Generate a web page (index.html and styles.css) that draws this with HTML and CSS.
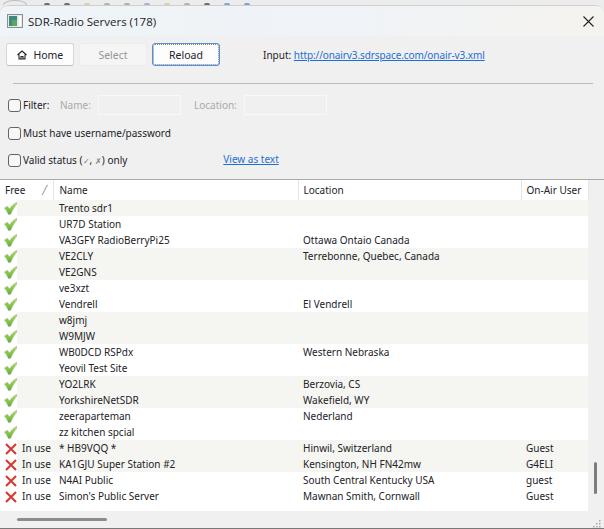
FILE: index.html
```html
<!DOCTYPE html>
<html>
<head>
<meta charset="utf-8">
<title>SDR-Radio Servers (178)</title>
<link rel="stylesheet" href="styles.css">
</head>
<body>

<svg class="defs" width="0" height="0">
  <defs>
    <linearGradient id="tick" x1="0" y1="0" x2="0" y2="1">
      <stop offset="0" stop-color="#bfe264"/>
      <stop offset="1" stop-color="#5cb035"/>
    </linearGradient>
    <symbol id="ok" viewBox="0 0 14 14">
      <path d="M0.4 7 L3.4 5.2 L5.6 8 C7.4 5 10 2.6 13.6 0.8 L13.9 2 C10.8 5 8.4 8.6 6.8 13.2 L4.4 13.6 C3.4 11 2.2 9 0.4 7 Z" fill="url(#tick)" stroke="#8fa884" stroke-width="0.4"/>
    </symbol>
    <symbol id="bad" viewBox="0 0 12 12">
      <path d="M1 1 L11 11 M11 1 L1 11" stroke="#d9352f" stroke-width="2" fill="none"/>
    </symbol>
  </defs>
</svg>

<div class="desk">
  <i class="ring"></i>
  <i class="dot dark"></i><i class="dot dark"></i><i class="dot tan"></i>
  <i class="dot grey"></i><i class="dot grey"></i><i class="dot violet"></i>
  <i class="dot tan"></i><i class="dot grey"></i><i class="dot dark"></i>
  <i class="dot blue"></i><i class="dot blue"></i>
</div>

<div class="window">
  <div class="titlebar">
    <svg class="appicon" width="16" height="14" viewBox="0 0 16 14">
      <rect x="0.5" y="0.5" width="15" height="13" fill="#e8e8e8" stroke="#8a8f94"/>
      <rect x="2" y="2" width="8" height="10" fill="#3d8a7c"/>
      <rect x="5" y="6" width="5" height="6" fill="#5aa860"/>
      <rect x="12" y="2" width="2" height="10" fill="#fff"/>
    </svg>
    <span class="title">SDR-Radio Servers (178)</span>
    <svg class="close" width="11" height="11" viewBox="0 0 11 11">
      <path d="M0.5 0.5 L10.5 10.5 M10.5 0.5 L0.5 10.5" stroke="#222" stroke-width="1.1" fill="none"/>
    </svg>
  </div>

  <div class="toolbar">
    <button class="btn">
      <svg width="10" height="10" viewBox="0 0 10 10">
        <path d="M0.5 5 L5 1 L9.5 5 M2 4.5 V9 H8 V4.5 M4 9 V6.5 H6 V9" stroke="#222" stroke-width="1.1" fill="none"/>
      </svg>
      Home
    </button>
    <button class="btn off">Select</button>
    <button class="btn focus">Reload</button>
    <span class="input">Input: <a href="#">http://onairv3.sdrspace.com/onair-v3.xml</a></span>
  </div>

  <div class="rule"></div>

  <div class="filters">
    <div class="line">
      <span class="box"></span><span class="lbl filter">Filter:</span>
      <span class="lbl dim name">Name:</span><span class="field"></span>
      <span class="lbl dim loc">Location:</span><span class="field"></span>
    </div>
    <div class="line">
      <span class="box"></span><span class="lbl">Must have username/password</span>
    </div>
    <div class="line">
      <span class="box"></span><span class="lbl valid">Valid status (<em>✓</em>, <em>✗</em>) only</span>
      <a class="astext" href="#">View as text</a>
    </div>
  </div>

  <div class="listarea">
    <div class="listwrap">
      <table class="servers">
        <colgroup>
          <col class="c-icon"><col class="c-free"><col class="c-name"><col class="c-loc"><col class="c-user">
        </colgroup>
        <thead>
          <tr>
            <th colspan="2"><div class="freehead"><span>Free</span><span class="sort">╱</span></div></th>
            <th>Name</th><th>Location</th><th>On-Air User</th>
          </tr>
        </thead>
        <tbody>
          <tr class="alt"><td class="ic"><svg><use href="#ok"/></svg></td><td></td><td>Trento sdr1</td><td></td><td></td></tr>
          <tr><td class="ic"><svg><use href="#ok"/></svg></td><td></td><td>UR7D Station</td><td></td><td></td></tr>
          <tr><td class="ic"><svg><use href="#ok"/></svg></td><td></td><td>VA3GFY RadioBerryPi25</td><td>Ottawa Ontaio Canada</td><td></td></tr>
          <tr class="alt"><td class="ic"><svg><use href="#ok"/></svg></td><td></td><td>VE2CLY</td><td>Terrebonne, Quebec, Canada</td><td></td></tr>
          <tr class="alt"><td class="ic"><svg><use href="#ok"/></svg></td><td></td><td>VE2GNS</td><td></td><td></td></tr>
          <tr><td class="ic"><svg><use href="#ok"/></svg></td><td></td><td>ve3xzt</td><td></td><td></td></tr>
          <tr><td class="ic"><svg><use href="#ok"/></svg></td><td></td><td>Vendrell</td><td>El Vendrell</td><td></td></tr>
          <tr class="alt"><td class="ic"><svg><use href="#ok"/></svg></td><td></td><td>w8jmj</td><td></td><td></td></tr>
          <tr class="alt"><td class="ic"><svg><use href="#ok"/></svg></td><td></td><td>W9MJW</td><td></td><td></td></tr>
          <tr><td class="ic"><svg><use href="#ok"/></svg></td><td></td><td>WB0DCD RSPdx</td><td>Western Nebraska</td><td></td></tr>
          <tr><td class="ic"><svg><use href="#ok"/></svg></td><td></td><td>Yeovil Test Site</td><td></td><td></td></tr>
          <tr class="alt"><td class="ic"><svg><use href="#ok"/></svg></td><td></td><td>YO2LRK</td><td>Berzovia, CS</td><td></td></tr>
          <tr class="alt"><td class="ic"><svg><use href="#ok"/></svg></td><td></td><td>YorkshireNetSDR</td><td>Wakefield, WY</td><td></td></tr>
          <tr><td class="ic"><svg><use href="#ok"/></svg></td><td></td><td>zeeraparteman</td><td>Nederland</td><td></td></tr>
          <tr><td class="ic"><svg><use href="#ok"/></svg></td><td></td><td>zz kitchen spcial</td><td></td><td></td></tr>
          <tr class="alt"><td class="ic"><svg class="x"><use href="#bad"/></svg></td><td>In use</td><td>* HB9VQQ *</td><td>Hinwil, Switzerland</td><td>Guest</td></tr>
          <tr class="alt"><td class="ic"><svg class="x"><use href="#bad"/></svg></td><td>In use</td><td>KA1GJU Super Station #2</td><td>Kensington, NH FN42mw</td><td>G4ELI</td></tr>
          <tr><td class="ic"><svg class="x"><use href="#bad"/></svg></td><td>In use</td><td>N4AI Public</td><td>South Central Kentucky USA</td><td>guest</td></tr>
          <tr><td class="ic"><svg class="x"><use href="#bad"/></svg></td><td>In use</td><td>Simon's Public Server</td><td>Mawnan Smith, Cornwall</td><td>Guest</td></tr>
        </tbody>
      </table>
    </div>
    <div class="vscroll"><div class="vthumb"></div></div>
  </div>

  <div class="statusbar">
    <div class="hthumb"></div>
    <svg class="grip" width="9" height="9" viewBox="0 0 9 9">
      <path d="M7 1h1.5v1.5H7z M4 4h1.5v1.5H4z M7 4h1.5v1.5H7z M1 7h1.5v1.5H1z M4 7h1.5v1.5H4z M7 7h1.5v1.5H7z" fill="#a8a8a8"/>
    </svg>
  </div>
</div>

</body>
</html>
```

FILE: styles.css
```css
html, body{
  margin:0px;
  padding:0px;
  height:529px;
  overflow:hidden;
  background:rgb(236,236,236);
}
body{
  font-family:"Noto Sans", sans-serif;
  font-size:10px;
  color:rgb(34,34,40);
}
.defs{
  display:block;
  height:0px;
}

.desk{
  height:5px;
  display:flex;
  gap:14px;
  align-items:flex-end;
  padding-left:3px;
  overflow:hidden;
}
.desk .ring{
  width:22px;
  height:8px;
  margin-right:3px;
  margin-bottom:-5px;
  border:1px solid rgb(190,190,190);
  border-radius:50%;
  flex:none;
}
.desk .dot{
  width:6px;
  height:2px;
  flex:none;
  border-radius:3px 3px 0px 0px;
}
.dot.dark{ background:rgb(110,110,110); }
.dot.tan{ background:rgb(220,205,170); }
.dot.grey{ background:rgb(175,175,175); }
.dot.violet{ background:rgb(175,170,215); }
.dot.blue{ background:rgb(130,160,215); }

.window{
  height:522px;
  display:flex;
  flex-direction:column;
  background:rgb(240,240,240);
  border-top:1px solid rgb(208,208,208);
  border-bottom:1px solid rgb(120,120,120);
  border-radius:9px 9px 0px 0px;
  overflow:hidden;
}

.titlebar{
  height:30px;
  flex:none;
  display:flex;
  align-items:center;
  padding:0px 10px 0px 7px;
  background:linear-gradient(to right, rgb(238,244,247), rgb(240,243,247) 60%, rgb(245,243,239));
}
.appicon{
  margin-right:5px;
}
.title{
  font-family:"Open Sans", sans-serif;
  font-size:11.5px;
  flex:1;
}

.toolbar{
  height:23px;
  flex:none;
  display:flex;
  align-items:center;
  margin-top:7px;
  padding-left:6px;
}
.btn{
  width:68px;
  height:23px;
  margin-right:5px;
  padding:0px;
  font-family:"Noto Sans", sans-serif;
  font-size:10.5px;
  color:rgb(34,34,40);
  background:rgb(253,253,253);
  border:1px solid rgb(214,214,214);
  border-bottom-color:rgb(190,190,190);
  border-radius:3px;
}
.btn svg{
  margin-right:4px;
  vertical-align:-1px;
}
.btn.off{
  color:rgb(150,150,150);
  background:rgb(245,245,245);
  border-color:rgb(236,236,236);
}
.btn.focus{
  background:rgb(253,253,253);
  border:1px solid rgb(80,145,215);
  outline:1px dotted rgb(130,130,130);
  outline-offset:-2px;
}
.input{
  margin-left:38px;
}
.input a{
  letter-spacing:-0.1px;
}
a{
  color:rgb(30,110,215);
}

.rule{
  height:1px;
  flex:none;
  margin:17px 11px 0px 13px;
  background:rgb(185,185,185);
}

.filters{
  height:95px;
  flex:none;
  border-bottom:1px solid rgb(170,170,170);
}
.line{
  height:20px;
  display:flex;
  align-items:center;
  padding-left:8px;
  margin-top:7px;
}
.line:first-child{
  margin-top:11px;
}
.line:nth-child(2){
  margin-top:8px;
}
.box{
  width:11px;
  height:11px;
  flex:none;
  margin-right:2px;
  background:rgb(247,247,247);
  border:1px solid rgb(100,100,100);
  border-radius:3px;
}
.lbl.filter{
  width:27px;
}
.lbl.dim{
  color:rgb(170,170,170);
}
.lbl.name{
  margin-left:10px;
  width:38px;
}
.lbl.loc{
  margin-left:13px;
  width:50px;
}
.field{
  width:81px;
  height:18px;
  background:rgb(240,240,240);
  border:1px solid rgb(248,248,248);
}
.valid em{
  font-style:normal;
  font-size:8px;
  color:rgb(120,120,120);
}
.astext{
  margin-left:96px;
  margin-top:-2px;
}

.listarea{
  height:331px;
  flex:none;
  display:flex;
}
.listwrap{
  width:588px;
  flex:none;
  background:white;
}
.servers{
  width:588px;
  table-layout:fixed;
  border-collapse:collapse;
}
.c-icon{ width:17px; }
.c-free{ width:36px; }
.c-name{ width:245px; }
.c-loc{ width:223px; }
.c-user{ width:67px; }
.servers th{
  height:20px;
  padding:0px 0px 0px 5px;
  font-weight:normal;
  text-align:left;
  border-right:1px solid rgb(229,229,229);
  white-space:nowrap;
}
.servers th:nth-child(2){
  padding-left:6px;
}
.freehead{
  display:flex;
  justify-content:space-between;
  padding-right:6px;
}
.sort{
  color:rgb(120,120,120);
  font-size:9px;
}
.servers td{
  height:16px;
  padding:0px 0px 0px 5px;
  white-space:nowrap;
  overflow:hidden;
}
.servers td:nth-child(3){
  padding-left:6px;
}
.servers tr.alt td{
  background:rgb(245,245,241);
}
.servers tr.alt td.ic{
  background:white;
}
.servers td.ic{
  padding:0px 0px 0px 4px;
}
.ic svg{
  display:block;
  width:14px;
  height:14px;
}
.ic svg.x{
  width:12px;
  height:12px;
  margin:1px 0px 0px 1px;
}

.vscroll{
  flex:1;
  display:flex;
  justify-content:center;
  align-items:flex-end;
  padding:0px 1px 17px 0px;
}
.vthumb{
  width:3px;
  height:32px;
  border-radius:2px;
  background:rgb(125,125,125);
}

.statusbar{
  flex:1;
  display:flex;
  align-items:flex-start;
  justify-content:space-between;
  padding:7px 3px 0px 17px;
}
.hthumb{
  width:90px;
  height:3px;
  border-radius:2px;
  background:rgb(140,140,140);
}
.grip{
  margin-top:1px;
}
```
